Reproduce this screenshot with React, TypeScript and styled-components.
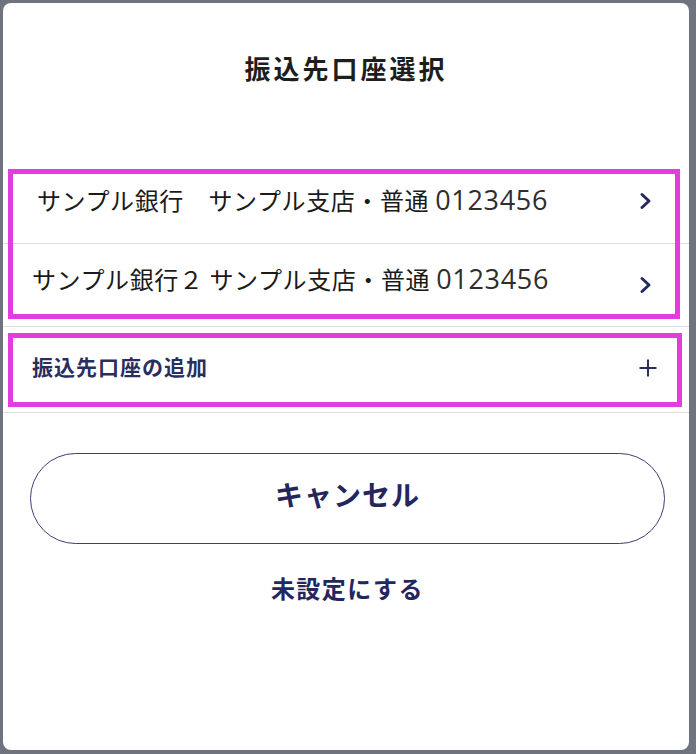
import React from "react";
import styled, { createGlobalStyle } from "styled-components";

const GlobalStyle = createGlobalStyle`
  html, body {
    margin: 0;
    padding: 0;
    background: #6f737d;
  }
  body {
    font-family: "Noto Sans CJK JP", "Noto Sans", sans-serif;
  }
`;

const Page = styled.div`
  width: 696px;
  height: 754px;
  padding: 3px 7px 4px 3px;
  box-sizing: border-box;
`;

const Modal = styled.div`
  height: 100%;
  background: #ffffff;
  border-radius: 8px;
  display: flex;
  flex-direction: column;
`;

const Header = styled.div`
  height: 162px;
  display: flex;
  justify-content: center;
  padding-top: 46px;
  box-sizing: border-box;
`;

const Title = styled.h1`
  margin: 0;
  font-size: 26px;
  line-height: 38px;
  font-weight: 700;
  letter-spacing: 3px;
  color: #1e1e1e;
`;

const Group = styled.div<{ $inset: string }>`
  position: relative;

  &::after {
    content: "";
    position: absolute;
    inset: ${({ $inset }) => $inset};
    border: 5px solid #e33ce0;
    pointer-events: none;
  }
`;

const Row = styled.div<{ $height: number; $indent: number; $right: number }>`
  height: ${({ $height }) => $height}px;
  display: flex;
  align-items: center;
  justify-content: space-between;
  padding: 0 ${({ $right }) => $right}px 0 ${({ $indent }) => $indent}px;
  border-bottom: 1px solid #dedede;
  box-sizing: border-box;
`;

const AccountText = styled.span<{ $shift: number }>`
  font-size: 24px;
  letter-spacing: 0.6px;
  color: #1a1a1a;
  white-space: pre;
  transform: translateY(${({ $shift }) => $shift}px);
`;

const Digits = styled.span`
  font-family: "Open Sans", "Noto Sans", sans-serif;
  font-size: 27px;
  letter-spacing: 0.7px;
  color: #2e2e2e;
`;

const AddLabel = styled.span`
  font-size: 21px;
  font-weight: 700;
  color: #2a2d5e;
  letter-spacing: 1px;
  transform: translateY(-4px);
`;

const Shifted = styled.span<{ $shift: number }>`
  display: block;
  transform: translateY(${({ $shift }) => $shift}px);
`;

const Icon = styled.svg`
  display: block;
  flex: none;
`;

const Actions = styled.div`
  display: flex;
  flex-direction: column;
  align-items: center;
  padding: 40px 24px 0 27px;
`;

const CancelButton = styled.button`
  width: 100%;
  height: 91px;
  padding: 0 0 10px;
  border: 1.5px solid #3a3f78;
  border-radius: 46px;
  background: #ffffff;
  font-family: inherit;
  font-size: 28px;
  font-weight: 700;
  color: #23275c;
  letter-spacing: 1px;
  cursor: pointer;
`;

const LinkButton = styled.button`
  margin-top: 25px;
  border: none;
  background: none;
  font-family: inherit;
  font-size: 24px;
  font-weight: 700;
  color: #23275c;
  letter-spacing: 1.5px;
  cursor: pointer;
`;

const Chevron = () => (
  <Icon width="14" height="18" viewBox="0 0 14 18">
    <path d="M3 2.5 L10 9 L3 15.5" fill="none" stroke="#262a63" strokeWidth="3" strokeLinecap="round" strokeLinejoin="round" />
  </Icon>
);

const Plus = () => (
  <Icon width="20" height="20" viewBox="0 0 20 20">
    <path d="M10 1.5 V18.5 M1.5 10 H18.5" fill="none" stroke="#2a2d5e" strokeWidth="2" />
  </Icon>
);

const accounts = [
  { bank: "サンプル銀行\u3000", indent: 34, height: 79, shift: -5, chevShift: -3 },
  { bank: "サンプル銀行２ ", indent: 29, height: 83, shift: -7, chevShift: 0 },
];

export default function App() {
  return (
    <>
      <GlobalStyle />
      <Page>
        <Modal>
          <Header>
            <Title>振込先口座選択</Title>
          </Header>
          <Group $inset="4px 9px 8px 5px">
            {accounts.map((a) => (
              <Row key={a.bank} $height={a.height} $indent={a.indent} $right={36}>
                <AccountText $shift={a.shift}>
                  {a.bank}サンプル支店・普通 <Digits>0123456</Digits>
                </AccountText>
                <Shifted $shift={a.chevShift}>
                  <Chevron />
                </Shifted>
              </Row>
            ))}
          </Group>
          <Group $inset="6px 7px 6px 5px">
            <Row $height={86} $indent={29} $right={31}>
              <AddLabel>振込先口座の追加</AddLabel>
              <Shifted $shift={-2}>
                <Plus />
              </Shifted>
            </Row>
          </Group>
          <Actions>
            <CancelButton>キャンセル</CancelButton>
            <LinkButton>未設定にする</LinkButton>
          </Actions>
        </Modal>
      </Page>
    </>
  );
}
